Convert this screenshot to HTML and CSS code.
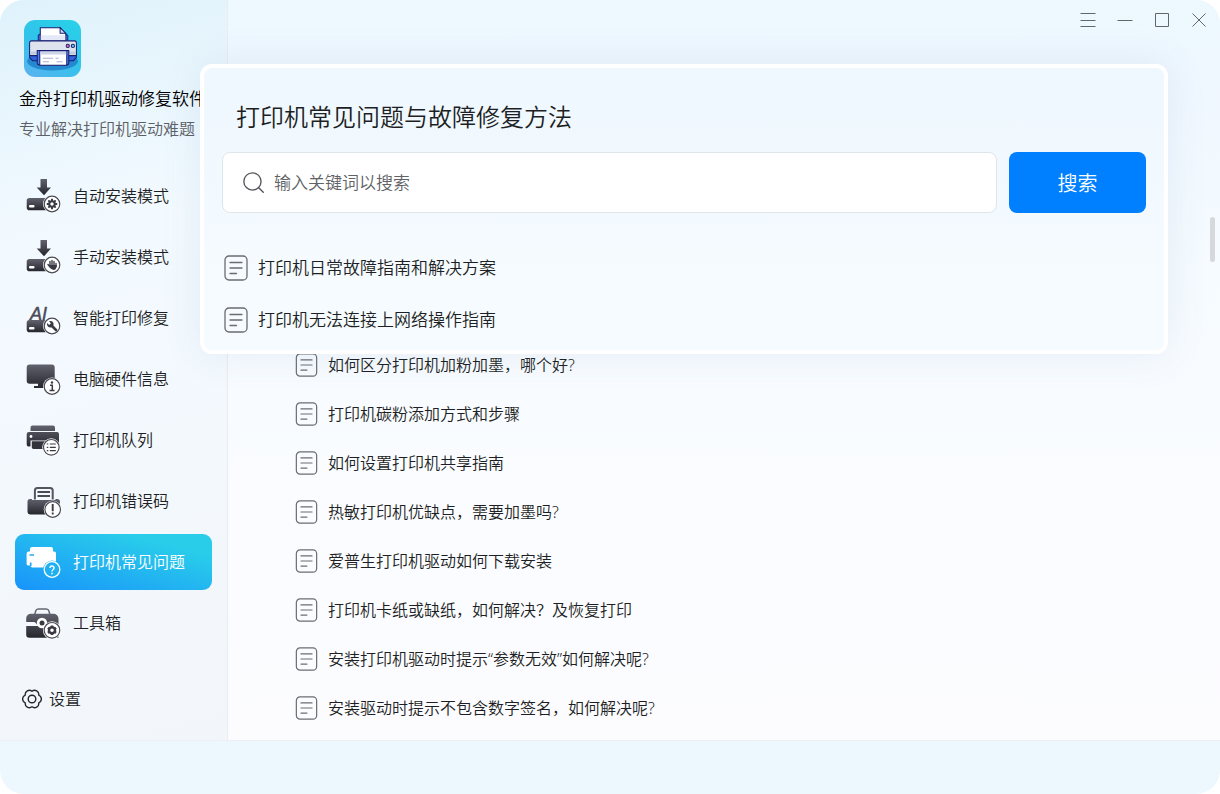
FILE: index.html
```html
<!DOCTYPE html>
<html lang="zh-CN">
<head>
<meta charset="utf-8">
<title>金舟打印机驱动修复软件</title>
<link rel="stylesheet" href="styles.css">
</head>
<body>
<svg class="defs" width="0" height="0" aria-hidden="true">
  <defs>
    <linearGradient id="ink" x1="0" y1="0" x2="0" y2="1"><stop offset="0" stop-color="#62626e"/><stop offset="1" stop-color="#26262e"/></linearGradient>
    <linearGradient id="logoBg" x1="0.8" y1="0" x2="0.2" y2="1"><stop offset="0" stop-color="#29d0e8"/><stop offset="0.5" stop-color="#30c4ea"/><stop offset="1" stop-color="#55b4ef"/></linearGradient>
    <symbol id="doc" viewBox="0 0 24 26"><g fill="none" stroke="#6a6d73" stroke-width="1.300" stroke-linecap="round"><rect x="1" y="1" width="22" height="24" rx="4"/><path d="M6 7.500h12M6 13h12M6 18.500h6.500"/></g></symbol>
    <symbol id="gear" viewBox="-8 -8 16 16"><path fill="none" stroke="currentColor" stroke-width="2.400" d="M0-3.100A3.100 3.100 0 1 1 0 3.100A3.100 3.100 0 1 1 0-3.100"/><path fill="none" stroke="currentColor" stroke-width="2.200" d="M0-3.500V-6M0 3.500V6M-3.500 0H-6M3.500 0H6M-2.500-2.500L-4.200-4.200M2.500 2.500L4.200 4.200M-2.500 2.500L-4.200 4.200M2.500-2.500L4.200-4.200"/></symbol>
  </defs>
</svg>
<div class="window">
  <div class="workspace">
    <aside class="sidebar">
      <header class="brand">
        <svg class="logo" viewBox="0 0 56 56" aria-hidden="true">
          <rect width="56" height="56" rx="11" fill="url(#logoBg)"/>
          <ellipse cx="28" cy="40.500" rx="25" ry="9" fill="#2489cf"/>
          <path d="M14 20v-5l3-2h22l4 2v5z" fill="#4471df" stroke="#1d2b7b"/>
          <path d="M16 20.500V7.500h19.500l5.500 6v7z" fill="#fff" stroke="#171f72"/>
          <path d="M16.500 15h24v5h-24z" fill="#e5e8f6"/>
          <path d="M35.500 7.500v5.500H41z" fill="#cfdbfb" stroke="#171f72"/>
          <path d="M5.500 32h46v5l-3 3h-40l-3-3z" fill="#2f65dd" stroke="#171f72"/>
          <path d="M7 20.500h43q1.500 0 1.500 2V34q0 1-1 1H6.500q-1 0-1-1V22.500q0-2 1.500-2z" fill="#dfe3ed" stroke="#171f72"/>
          <path d="M6 31h45v3H6z" fill="#c3cbde"/>
          <path d="M13 30h31v12q0 2-2 2H15q-2 0-2-2z" fill="#4d83f0" stroke="#171f72"/>
          <path d="M15.500 30.500h26.500V44.500H15.500z" fill="#fff" stroke="#171f72"/>
          <path d="M16 31h25.500v3H16z" fill="#cdd4e8"/>
          <path d="M18.500 37.500h10M31 37.500h3M18.500 41h6M32 41h6" stroke="#aab1d4"/>
          <circle cx="43" cy="25.500" r="1.600" fill="#ed6d9c" stroke="#171f72"/>
          <circle cx="48" cy="25.500" r="1.600" fill="#71cff1" stroke="#171f72"/>
        </svg>
        <h1 class="brand-name">金舟打印机驱动修复软件</h1>
        <p class="brand-tagline">专业解决打印机驱动难题</p>
      </header>
      <nav class="nav">
        <button class="nav-item" type="button">
          <svg class="nav-icon" viewBox="0 0 36 36" aria-hidden="true"><path fill="url(#ink)" d="M14.500 1h6.500v8.500h4L18 17.300 10.700 9.500h3.800z"/><path fill="url(#ink)" d="M3.500 20h23v12.200h-23a2.800 2.800 0 0 1-2.800-2.800v-6.600A2.800 2.800 0 0 1 3.500 20z"/><rect x="3" y="27" width="5.500" height="2.600" rx="1" fill="#fff"/><circle cx="26" cy="26" r="9" fill="#fff"/><circle cx="26" cy="26" r="7.800" fill="#fff" stroke="#4a4a54" stroke-width="1.200"/><use href="#gear" x="19" y="19" width="14" height="14" color="#3a3a44"/></svg>
          <span>自动安装模式</span>
        </button>
        <button class="nav-item" type="button">
          <svg class="nav-icon" viewBox="0 0 36 36" aria-hidden="true"><path fill="url(#ink)" d="M14.500 1h6.500v8.500h4L18 17.300 10.700 9.500h3.800z"/><path fill="url(#ink)" d="M3.500 20h23v12.200h-23a2.800 2.800 0 0 1-2.800-2.800v-6.600A2.800 2.800 0 0 1 3.500 20z"/><rect x="3" y="27" width="5.500" height="2.600" rx="1" fill="#fff"/><circle cx="26" cy="26" r="9" fill="#fff"/><circle cx="26" cy="26" r="7.800" fill="#fff" stroke="#4a4a54" stroke-width="1.200"/><path d="M24 27v-4.500M26 27v-5.500M28 27v-4.500M30 27.500v-3M22 25.500l2.500 3" fill="none" stroke="#3a3a44" stroke-width="1.400" stroke-linecap="round"/><path d="M23.300 26h7.400v1.500q-.7 3.500-3.200 3.500-2.200 0-4.200-3.500z" fill="#3a3a44"/></svg>
          <span>手动安装模式</span>
        </button>
        <button class="nav-item" type="button">
          <svg class="nav-icon" viewBox="0 0 36 36" aria-hidden="true"><text class="icon-ai" x="4" y="20">AI</text><path fill="url(#ink)" d="M3.500 20h23v12.200h-23a2.800 2.800 0 0 1-2.800-2.800v-6.600A2.800 2.800 0 0 1 3.500 20z"/><rect x="3" y="27" width="5.500" height="2.600" rx="1" fill="#fff"/><circle cx="26" cy="26" r="9" fill="#fff"/><circle cx="26" cy="26" r="7.800" fill="#fff" stroke="#4a4a54" stroke-width="1.200"/><path d="M25.500 25.500l4.500 4.500" stroke="#3a3a44" stroke-width="2.600" stroke-linecap="round"/><path d="M23 21.200a3.300 3.300 0 1 1-1.800 1.900l2 1.800 1.700-1.700z" fill="#3a3a44"/></svg>
          <span>智能打印修复</span>
        </button>
        <button class="nav-item" type="button">
          <svg class="nav-icon" viewBox="0 0 36 36" aria-hidden="true"><path fill="url(#ink)" d="M3.700 3.500h22a3 3 0 0 1 3 3v13.300a3 3 0 0 1-3 3h-22a3 3 0 0 1-3-3V6.500a3 3 0 0 1 3-3zM12 22h7v3h2v2H8v-2h4z"/><circle cx="26" cy="25.500" r="9" fill="#fff"/><circle cx="26" cy="25.500" r="7.800" fill="#fff" stroke="#4a4a54" stroke-width="1.200"/><circle cx="26" cy="21.500" r="1.200" fill="#3a3a44"/><path d="M24 24.300h2.300v5M23.500 29.600h5" fill="none" stroke="#3a3a44" stroke-width="1.500"/></svg>
          <span>电脑硬件信息</span>
        </button>
        <button class="nav-item" type="button">
          <svg class="nav-icon" viewBox="0 0 36 36" aria-hidden="true"><path fill="url(#ink)" d="M6.500 3.500h20.500a2 2 0 0 1 2 2V9H4.500V5.500a2 2 0 0 1 2-2zM3 10h28a2 2 0 0 1 2 2v12H4.500v.5H2.500a2 2 0 0 1-1.800-2V12.300A2.300 2.300 0 0 1 3 10z"/><circle cx="5" cy="14.500" r="1.400" fill="#fff"/><path d="M4.500 18.500h22V26h-22z" fill="#f4f9fe"/><path d="M5.800 19.200h18V27H7.500a1.700 1.700 0 0 1-1.700-1.700z" fill="#34343d"/><circle cx="25.300" cy="25.300" r="9" fill="#fff"/><circle cx="25.300" cy="25.300" r="7.800" fill="#fff" stroke="#4a4a54" stroke-width="1.200"/><path d="M23.800 22h6M23.800 25.300h6M23.800 28.600h6M20.800 22h1.500M20.800 25.300h1.500M20.800 28.600h1.500" stroke="#3a3a44" stroke-width="1.200"/></svg>
          <span>打印机队列</span>
        </button>
        <button class="nav-item" type="button">
          <svg class="nav-icon" viewBox="0 0 36 36" aria-hidden="true"><path d="M8.900 16.500V7.500a2.500 2.500 0 0 1 2.500-2.500h12.800a2.500 2.500 0 0 1 2.500 2.500v9" fill="#f4f9fe" stroke="#55555f" stroke-width="2"/><path d="M11.500 9h12.500M11.500 13h12.500" stroke="#4b4b56" stroke-width="1.800"/><path fill="url(#ink)" d="M4 16h2v1h23.500v-1h1.500a3 3 0 0 1 3 3v12.500H4.500a3 3 0 0 1-3-3v-10A2.500 2.500 0 0 1 4 16z"/><circle cx="26.700" cy="26.500" r="9" fill="#fff"/><circle cx="26.700" cy="26.500" r="7.800" fill="#fff" stroke="#4a4a54" stroke-width="1.200"/><path d="M26.700 21v7.200M26.700 29.500v2" stroke="#3a3a44" stroke-width="1.900"/></svg>
          <span>打印机错误码</span>
        </button>
        <button class="nav-item nav-item-active" type="button" aria-current="page">
          <svg class="nav-icon" viewBox="0 0 36 36" aria-hidden="true"><path fill="#fff" d="M6 3h19a2 2 0 0 1 2 2v2.500h1a2 2 0 0 1 2 2V21H22v2.500H6.500a2 2 0 0 1-2-2H2.200A1.700 1.700 0 0 1 .6 19.800V9.500a2 2 0 0 1 2-2H4V5a2 2 0 0 1 2-2z"/><path d="M3.500 11h4.500M4.700 18.500v3.500" stroke="#24a9f2" stroke-width="1.700"/><circle cx="26" cy="25.500" r="9" fill="#1fb3f1"/><circle cx="26" cy="25.500" r="7.800" fill="#1fb0f1" stroke="#fff" stroke-width="1.300"/><path d="M24 24a2 2 0 1 1 3.200 1.500q-1.200.8-1.200 1.900M26 28.800v1.400" fill="none" stroke="#fff" stroke-width="1.500"/></svg>
          <span>打印机常见问题</span>
        </button>
        <button class="nav-item" type="button">
          <svg class="nav-icon" viewBox="0 0 36 36" aria-hidden="true"><path d="M8.700 9.500l1-3.500q.6-2 2.600-2h8q2 0 2.600 2l1 3.500" fill="none" stroke="#666670" stroke-width="1.500"/><path fill="url(#ink)" d="M5 8.700h22.500a5 5 0 0 1 5 5V19.500H.2v-6A4.800 4.800 0 0 1 5 8.700zM.2 20.700h32.300v12H3.400a3.200 3.200 0 0 1-3.200-3.200z"/><path d="M0 17h8q1.500 0 2.200 1.500l1.800 2.400H0z" fill="#f4f9fe"/><circle cx="16" cy="18" r="5.200" fill="#fff"/><circle cx="16" cy="18" r="2.500" fill="#3a3a44"/><circle cx="26" cy="25.300" r="9" fill="#fff"/><circle cx="26" cy="25.300" r="7.800" fill="#fff" stroke="#4a4a54" stroke-width="1.200"/><circle cx="26" cy="25.300" r="3" fill="none" stroke="#3a3a44" stroke-width="2.400"/><path d="M26 20.500v1.600M26 28.500v1.600M21.800 23l1.500.8M30.200 23l-1.500.8M21.800 27.700l1.500-.8M30.200 27.700l-1.500-.8" stroke="#3a3a44" stroke-width="2.400"/></svg>
          <span>工具箱</span>
        </button>
      </nav>
      <button class="settings" type="button">
        <svg class="settings-icon" viewBox="0 0 20 20" aria-hidden="true"><g fill="none" stroke="#24262b" stroke-width="1.400" stroke-linejoin="round"><path d="M10 2.200A4.200 4.200 0 0 1 16.750 6.100A4.200 4.200 0 0 1 16.750 13.900A4.200 4.200 0 0 1 10 17.800A4.200 4.200 0 0 1 3.250 13.900A4.200 4.200 0 0 1 3.250 6.100A4.200 4.200 0 0 1 10 2.200z"/><circle cx="10" cy="10" r="3.800"/></g></svg>
        <span>设置</span>
      </button>
    </aside>
    <main class="content">
      <div class="window-controls">
        <button type="button" aria-label="菜单"><svg viewBox="0 0 16 16"><path d="M.5 1.500h15M.5 8.500h15M.5 14.500h15"/></svg></button>
        <button type="button" aria-label="最小化"><svg viewBox="0 0 16 16"><path d="M.5 8.500h15"/></svg></button>
        <button type="button" aria-label="最大化"><svg viewBox="0 0 16 16"><path d="M1.500 1.500h13v13h-13z"/></svg></button>
        <button type="button" aria-label="关闭"><svg viewBox="0 0 16 16"><path d="M1.500 1.500l13 13M14.500 1.500l-13 13"/></svg></button>
      </div>
      <ul class="articles">
        <li><a href="#a1"><svg class="doc" aria-hidden="true"><use href="#doc"/></svg>如何区分打印机加粉加墨，哪个好?</a></li>
        <li><a href="#a2"><svg class="doc" aria-hidden="true"><use href="#doc"/></svg>打印机碳粉添加方式和步骤</a></li>
        <li><a href="#a3"><svg class="doc" aria-hidden="true"><use href="#doc"/></svg>如何设置打印机共享指南</a></li>
        <li><a href="#a4"><svg class="doc" aria-hidden="true"><use href="#doc"/></svg>热敏打印机优缺点，需要加墨吗?</a></li>
        <li><a href="#a5"><svg class="doc" aria-hidden="true"><use href="#doc"/></svg>爱普生打印机驱动如何下载安装</a></li>
        <li><a href="#a6"><svg class="doc" aria-hidden="true"><use href="#doc"/></svg>打印机卡纸或缺纸，如何解决？及恢复打印</a></li>
        <li><a href="#a7"><svg class="doc" aria-hidden="true"><use href="#doc"/></svg>安装打印机驱动时提示“参数无效”如何解决呢?</a></li>
        <li><a href="#a8"><svg class="doc" aria-hidden="true"><use href="#doc"/></svg>安装驱动时提示不包含数字签名，如何解决呢?</a></li>
      </ul>
      <div class="scroll-thumb"></div>
    </main>
  </div>
  <footer class="statusbar"></footer>
  <section class="panel">
    <h2 class="panel-title">打印机常见问题与故障修复方法</h2>
    <form class="search">
      <label class="search-field">
        <svg class="search-icon" viewBox="0 0 20 20" aria-hidden="true"><g fill="none" stroke="#55575c" stroke-width="1.300" stroke-linecap="round"><circle cx="9" cy="9" r="8.200"/><path d="M15 15l4.300 4.300"/></g></svg>
        <input class="search-input" type="text" placeholder="输入关键词以搜索" aria-label="输入关键词以搜索">
      </label>
      <button class="search-button" type="button">搜索</button>
    </form>
    <ul class="featured">
      <li><a href="#f1"><svg class="doc doc-large" aria-hidden="true"><use href="#doc"/></svg>打印机日常故障指南和解决方案</a></li>
      <li><a href="#f2"><svg class="doc doc-large" aria-hidden="true"><use href="#doc"/></svg>打印机无法连接上网络操作指南</a></li>
    </ul>
  </section>
</div>
</body>
</html>
```
FILE: styles.css
```css
* {
  box-sizing: border-box;
}

body {
  margin: 0;
  background: #fff;
  color: #1d1f24;
  font-family: "Noto Sans", "Noto Sans CJK SC", sans-serif;
  font-size: 16px;
  font-weight: 350;
  line-height: 24px;
}

h1, h2, p, ul {
  margin: 0;
  padding: 0;
  font-weight: inherit;
}

ul {
  list-style: none;
}

a {
  color: inherit;
  text-decoration: none;
}

button, input {
  padding: 0;
  border: 0;
  background: none;
  color: inherit;
  font: inherit;
}

.defs {
  position: absolute;
}

.window {
  position: relative;
  display: flex;
  flex-direction: column;
  min-height: 100vh;
  overflow: hidden;
  border-radius: 24px;
  background: #edf8fe;
}

.workspace {
  display: flex;
  flex: 1;
}

.statusbar {
  height: 54px;
  border-top: 1px solid #ecf0f3;
}

.sidebar {
  display: flex;
  flex: none;
  flex-direction: column;
  width: 228px;
  padding: 20px 15px 29px;
  border-right: 1px solid #e9edf0;
  background: linear-gradient(165deg, #dff2fb 0%, #e9f6fd 16%, #f3faff 32%, #f3f8fd 65%, #f2f6fa 100%);
}

.brand {
  padding-left: 4px;
  white-space: nowrap;
}

.logo {
  display: block;
  width: 57px;
  height: 57px;
  margin-left: 5px;
}

.brand-name {
  margin-top: 7px;
  color: #000;
  font-size: 17px;
  line-height: 30px;
}

.brand-tagline {
  color: #5c6065;
  line-height: 30px;
}

.nav {
  display: flex;
  flex-direction: column;
  gap: 5px;
  margin-top: 24px;
}

.nav-item {
  display: flex;
  align-items: center;
  gap: 11px;
  height: 56px;
  padding-left: 11px;
  border-radius: 9px;
}

.nav-item-active {
  background: linear-gradient(15deg, #1893fb 0%, #22b4f1 45%, #29cdea 80%);
  color: #fff;
}

.nav-icon {
  width: 36px;
  height: 36px;
}

.icon-ai {
  fill: #4b4b56;
  stroke: #4b4b56;
  stroke-width: 0.5;
  font-family: "Liberation Sans", sans-serif;
  font-size: 18px;
  font-style: italic;
  font-weight: 400;
}

.settings {
  display: flex;
  align-items: center;
  align-self: flex-start;
  gap: 7px;
  margin-top: auto;
  padding-left: 7px;
}

.settings-icon {
  width: 20px;
  height: 20px;
}

.content {
  position: relative;
  flex: 1;
  background: linear-gradient(180deg, #edf9fe 0%, #eff7ff 10%, #f5fbff 35%, #fafcff 65%, #fcfcff 100%);
}

.window-controls {
  display: flex;
  justify-content: flex-end;
  gap: 21px;
  padding: 12px 13px 0 0;
}

.window-controls button {
  width: 16px;
  height: 16px;
}

.window-controls svg {
  display: block;
  width: 16px;
  height: 16px;
  fill: none;
  stroke: #63666b;
  stroke-width: 1;
}

.articles {
  display: flex;
  flex-direction: column;
  gap: 25px;
  padding: 325px 20px 20px 67px;
}

.articles a,
.featured a {
  display: flex;
  align-items: center;
  gap: 10px;
}

.doc {
  flex: none;
  width: 23px;
  height: 24px;
}

.doc-large {
  width: 24px;
  height: 26px;
}

.scroll-thumb {
  position: absolute;
  top: 217px;
  right: 5px;
  width: 5px;
  height: 45px;
  border-radius: 3px;
  background: #d5d9dc;
}

.panel {
  position: absolute;
  top: 64px;
  right: 52px;
  left: 200px;
  padding: 31px 18px 17px;
  border: 4px solid #fff;
  border-radius: 12px;
  background: linear-gradient(180deg, #eff8ff 0%, #f2f9ff 45%, #f6fbff 75%, #f6fbff 100%);
  box-shadow: 0 0 40px rgba(70, 110, 160, 0.1);
}

.panel-title {
  padding-left: 14px;
  font-size: 24px;
  line-height: 36px;
}

.search {
  display: flex;
  gap: 12px;
  height: 61px;
  margin-top: 17px;
}

.search-field {
  display: flex;
  flex: 1;
  align-items: center;
  gap: 10px;
  padding: 0 20px;
  border: 1px solid #dfe6ea;
  border-radius: 8px;
  background: #fff;
}

.search-icon {
  flex: none;
  width: 21px;
  height: 21px;
}

.search-input {
  flex: 1;
  min-width: 0;
  outline: none;
  font-size: 17px;
}

.search-input::placeholder {
  color: #606266;
  opacity: 1;
}

.search-button {
  width: 137px;
  padding-top: 2px;
  border-radius: 8px;
  background: #007fff;
  color: #fff;
  font-size: 20px;
}

.featured {
  display: flex;
  flex-direction: column;
  gap: 26px;
  margin-top: 42px;
  padding-left: 2px;
  font-size: 17px;
}
```
